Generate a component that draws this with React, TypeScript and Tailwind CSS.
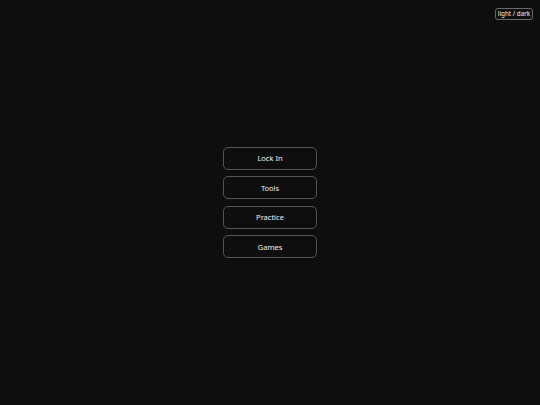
import React from "react";

export default function App() {
  const items = ["Lock In", "Tools", "Practice", "Games"];
  return (
    <div
      className="relative w-full h-[405px] bg-[#0e0e0e] flex items-center justify-center"
      style={{ fontFamily: '"Noto Sans", "Open Sans", sans-serif' }}
    >
      <button className="absolute top-[8px] right-[7px] w-[38px] h-[12px] border border-[#6a6a6a] rounded-[3px] text-[6.3px] leading-none text-[#f0f0f0] flex items-center justify-center">
        light / dark
      </button>
      <div className="flex flex-col gap-[6.5px]">
        {items.map((t) => (
          <button
            key={t}
            className="w-[94px] h-[23px] border border-[#555555] rounded-[5px] text-[7.5px] leading-none text-[#f4f4f4] flex items-center justify-center pt-[1px]"
          >
            {t}
          </button>
        ))}
      </div>
    </div>
  );
}
